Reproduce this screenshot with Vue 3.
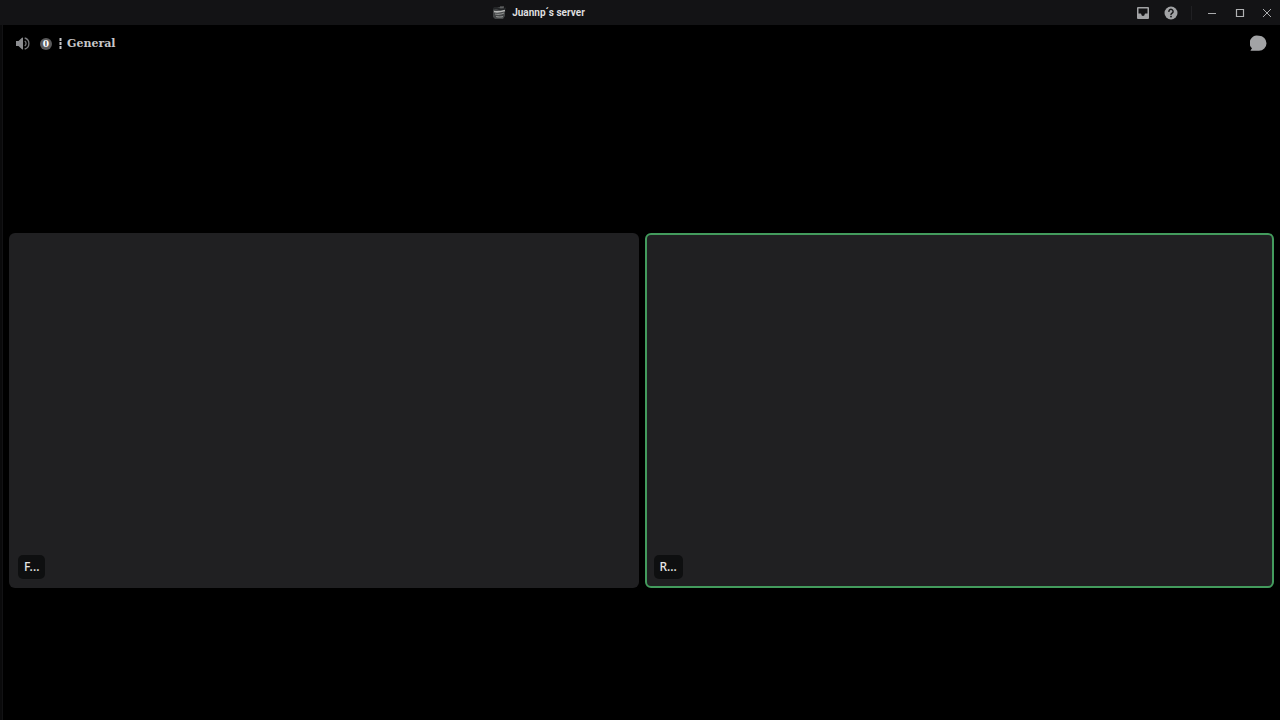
<script setup>
const participants = [
  { id: 1, label: 'F...', speaking: false },
  { id: 2, label: 'R...', speaking: true },
]
</script>

<template>
  <div class="window">
    <header class="titlebar">
      <div class="server">
        <svg class="server-icon" width="13" height="13" viewBox="0 0 13 13" aria-hidden="true">
          <path d="M2 1h8l2 2v7l-2 3H2L0 11V3z" fill="#434546" />
          <path d="M0 3q3-2 6 0t7-1" fill="none" stroke="#222426" stroke-width="2" />
          <path d="M1 5.500q4 1 11-1" fill="none" stroke="#b5b6b5" stroke-width="1.600" />
          <path d="M2 8q5 1 9-1M3 10.500q4 1 7 0" fill="none" stroke="#8d8f8e" stroke-width="1.200" />
          <path d="M7 1h4" stroke="#777978" />
        </svg>
        <span>Juannp´s server</span>
      </div>
      <div class="tools">
        <button class="tool" aria-label="Inbox">
          <svg width="12" height="12" viewBox="0 0 12 12">
            <path fill="#a2a3a5" fill-rule="evenodd" d="M1 0h10a1 1 0 0 1 1 1v10a1 1 0 0 1-1 1H1a1 1 0 0 1-1-1V1a1 1 0 0 1 1-1zM1.500 1.500v5h2A.8.8 0 0 1 4.300 7.300a1.700 1.700 0 0 0 3.400 0 .8.8 0 0 1 .8-.8h2v-5z" />
          </svg>
        </button>
        <button class="tool" aria-label="Help">
          <svg width="14" height="14" viewBox="0 0 14 14">
            <circle cx="7" cy="7" r="6.500" fill="#a2a3a5" />
            <path d="M4.900 5.400a2.100 2.100 0 1 1 3.300 1.700C7.400 7.600 7 7.800 7 8.600" fill="none" stroke="#161618" stroke-width="1.400" stroke-linecap="round" />
            <circle cx="7" cy="10.600" r=".9" fill="#161618" />
          </svg>
        </button>
        <span class="divider"></span>
        <button class="tool" aria-label="Minimize">
          <svg width="10" height="10" viewBox="0 0 10 10"><path d="M1 5.500h8" stroke="#aaabad" /></svg>
        </button>
        <button class="tool" aria-label="Maximize">
          <svg width="10" height="10" viewBox="0 0 10 10"><path d="M1.500 1.500h7v7h-7z" fill="none" stroke="#b0b1b3" stroke-width="1.200" /></svg>
        </button>
        <button class="tool" aria-label="Close">
          <svg width="10" height="10" viewBox="0 0 10 10"><path d="M1 1l8 8M9 1L1 9" stroke="#aaabad" /></svg>
        </button>
      </div>
    </header>

    <div class="body">
      <aside class="rail"></aside>
      <main class="call">
        <div class="channel">
          <svg width="14" height="14" viewBox="0 0 14 14" aria-hidden="true">
            <path d="M0 4h2.500L6 .7q1-.8 1 .4v10.800q0 1.200-1 .4L2.500 9H0z" fill="#8c8d90" />
            <path d="M8.700 4a3 3 0 0 1 0 5M8.700 1a5.700 5.700 0 0 1 0 11" fill="none" stroke="#77787b" stroke-width="1.300" />
          </svg>
          <span class="badge">0</span>
          <h1 class="name">
            <svg class="bar" width="3" height="11" viewBox="0 0 3 11" aria-hidden="true">
              <path d="M1.500 0v3M1.500 4v3M1.500 8v3" stroke="#c6c6c7" stroke-width="2" />
            </svg>
            <span>General</span>
          </h1>
          <button class="chat" aria-label="Show chat">
            <svg width="17" height="17" viewBox="0 0 17 17">
              <path d="M9 .8a7.400 7.400 0 1 1 0 15H1.200q-1-.1-.4-.8l1.200-1.700A7.400 7.400 0 0 1 9 .8z" fill="#a2a3a5" />
            </svg>
          </button>
        </div>
        <section class="stage" aria-label="Participants">
          <div v-for="p in participants" :key="p.id" class="tile" :class="{ speaking: p.speaking }">
            <span class="label">{{ p.label }}</span>
          </div>
        </section>
      </main>
    </div>
  </div>
</template>

<style>
body {
  background: #000;
}
</style>

<style scoped>
.window {
  display: flex;
  flex-direction: column;
  min-height: 100vh;
  background: #000;
  color: #dededf;
  font-family: "Noto Sans", "Open Sans", sans-serif;
}
.titlebar {
  display: grid;
  grid-template-columns: 1fr auto 1fr;
  align-items: center;
  height: 25px;
  background: #131315;
}
.server {
  grid-column: 2;
  display: flex;
  align-items: center;
  gap: 6px;
  margin-right: 202px;
  font: 700 10px/14px Roboto, sans-serif;
}
.tools {
  display: flex;
  justify-content: flex-end;
  align-items: center;
}
button {
  padding: 0;
  border: 0;
  background: none;
  cursor: pointer;
}
.tool {
  display: flex;
  align-items: center;
  justify-content: center;
  width: 28px;
  height: 24px;
}
.tool:last-child {
  width: 26px;
}
.divider {
  width: 1px;
  height: 14px;
  margin: 0 6px;
  background: #202023;
}
.body {
  flex: 1;
  display: flex;
}
.rail {
  width: 2px;
  border-right: 1px solid #121214;
  background: #0a0a0b;
}
.call {
  flex: 1;
  display: flex;
  flex-direction: column;
}
.channel {
  display: flex;
  align-items: center;
  height: 37px;
  padding: 0 13px;
}
.badge {
  width: 12px;
  height: 12px;
  margin: 0 7px 0 10px;
  border-radius: 50%;
  background: #5a5a5b;
  color: #fff;
  font: 700 9px/12px "DejaVu Serif", serif;
  text-align: center;
}
.name {
  display: flex;
  align-items: center;
  gap: 5px;
  margin: 0;
  font: 700 11px/16px "DejaVu Serif", serif;
  color: #c8c8c9;
}
.chat {
  display: flex;
  margin-left: auto;
}
.stage {
  flex: 1;
  display: grid;
  grid-template-columns: 1fr 1fr;
  align-items: center;
  gap: 6px;
  padding: 39px 6px 0;
}
.tile {
  display: flex;
  align-items: flex-end;
  box-sizing: border-box;
  aspect-ratio: 16 / 9;
  padding: 9px;
  border-radius: 6px;
  background: #202022;
}
.speaking {
  padding: 7px;
  border: 2px solid #439b5d;
}
.label {
  padding: 4px 6px;
  border-radius: 5px;
  background: #0e0f10;
  font-size: 12px;
  font-weight: 500;
  line-height: 16px;
  color: #e6e6e7;
}
</style>
